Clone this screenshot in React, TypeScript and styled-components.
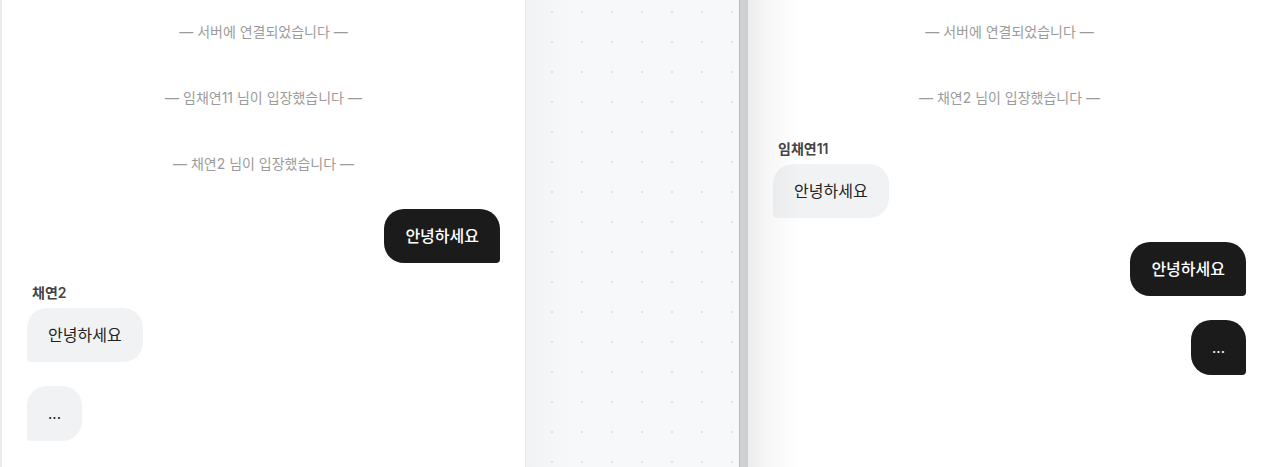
import React from "react";
import styled, { createGlobalStyle } from "styled-components";

const Global = createGlobalStyle`
  html, body { margin: 0; padding: 0; height: 100%; overflow: hidden; background: #ffffff; }
  body { font-family: Inter, "Noto Sans CJK KR", sans-serif; }
  #root { height: 100%; }
`;

const Stage = styled.div`
  display: flex;
  height: 467px;
  width: 1267px;
  overflow: hidden;
`;

const ChatPanel = styled.div<{ $side: "left" | "right" }>`
  position: relative;
  flex: 0 0 auto;
  box-sizing: border-box;
  width: ${(p) => (p.$side === "left" ? "526px" : "523px")};
  height: 100%;
  background: #ffffff;
  border-left: ${(p) => (p.$side === "left" ? "2px solid #ececee" : "none")};
  border-right: ${(p) => (p.$side === "left" ? "1px solid #e6e7ea" : "none")};
  padding: 11px 25px 0 25px;
  display: flex;
  flex-direction: column;
  gap: 24px;
`;

const EdgeShade = styled.div`
  position: absolute;
  left: 0;
  top: 0;
  bottom: 0;
  width: 52px;
  background: linear-gradient(to right, rgba(0, 0, 0, 0.075), rgba(0, 0, 0, 0.03) 40%, rgba(0, 0, 0, 0));
  pointer-events: none;
  z-index: 2;
`;

const Canvas = styled.div`
  flex: 0 0 213px;
  height: 100%;
  background-color: #f7f8fa;
  background-image: linear-gradient(to right, rgba(0, 0, 0, 0.025), rgba(0, 0, 0, 0) 45px),
    radial-gradient(circle, #dfe1e5 0.9px, transparent 1.1px);
  background-size: 100% 100%, 30px 30px;
  background-position: 0 0, 11px -3px;
`;

const Divider = styled.div`
  flex: 0 0 9px;
  height: 100%;
  box-sizing: border-box;
  border-left: 1px solid #b9babd;
  background: linear-gradient(to right, #d2d3d5, #cdcecf);
`;

const SystemLine = styled.div`
  padding: 11px 0;
  text-align: center;
  font-size: 14px;
  line-height: 20px;
  color: #9b9b9b;
`;

const Group = styled.div<{ $mine?: boolean }>`
  display: flex;
  flex-direction: column;
  align-items: ${(p) => (p.$mine ? "flex-end" : "flex-start")};
`;

const Sender = styled.div`
  font-size: 14px;
  line-height: 16px;
  font-weight: 600;
  color: #444;
  margin: -2px 0 7px 5px;
`;

const Bubble = styled.div<{ $mine?: boolean }>`
  padding: 15px 21px;
  font-size: 16px;
  line-height: 24px;
  background: ${(p) => (p.$mine ? "#1b1b1b" : "#f1f2f4")};
  color: ${(p) => (p.$mine ? "#ffffff" : "#222222")};
  font-weight: ${(p) => (p.$mine ? 500 : 400)};
  border-radius: ${(p) => (p.$mine ? "20px 20px 4px 20px" : "20px 20px 20px 4px")};
  white-space: nowrap;
`;

const Dots = styled.span`
  font-size: 15px;
  font-weight: 400;
`;

type Item =
  | { kind: "sys"; text: string }
  | { kind: "msg"; mine: boolean; text: string; sender?: string };

const leftItems: Item[] = [
  { kind: "sys", text: "— 서버에 연결되었습니다 —" },
  { kind: "sys", text: "— 임채연11 님이 입장했습니다 —" },
  { kind: "sys", text: "— 채연2 님이 입장했습니다 —" },
  { kind: "msg", mine: true, text: "안녕하세요" },
  { kind: "msg", mine: false, text: "안녕하세요", sender: "채연2" },
  { kind: "msg", mine: false, text: "..." },
];

const rightItems: Item[] = [
  { kind: "sys", text: "— 서버에 연결되었습니다 —" },
  { kind: "sys", text: "— 채연2 님이 입장했습니다 —" },
  { kind: "msg", mine: false, text: "안녕하세요", sender: "임채연11" },
  { kind: "msg", mine: true, text: "안녕하세요" },
  { kind: "msg", mine: true, text: "..." },
];

function Messages({ items }: { items: Item[] }) {
  return (
    <>
      {items.map((it, i) =>
        it.kind === "sys" ? (
          <SystemLine key={i}>{it.text}</SystemLine>
        ) : (
          <Group key={i} $mine={it.mine}>
            {it.sender && <Sender>{it.sender}</Sender>}
            <Bubble $mine={it.mine}>
              {it.text === "..." ? <Dots>{it.text}</Dots> : it.text}
            </Bubble>
          </Group>
        )
      )}
    </>
  );
}

export default function App() {
  return (
    <>
      <Global />
      <Stage>
        <ChatPanel $side="left">
          <Messages items={leftItems} />
        </ChatPanel>
        <Canvas />
        <Divider />
        <ChatPanel $side="right">
          <EdgeShade />
          <Messages items={rightItems} />
        </ChatPanel>
      </Stage>
    </>
  );
}
